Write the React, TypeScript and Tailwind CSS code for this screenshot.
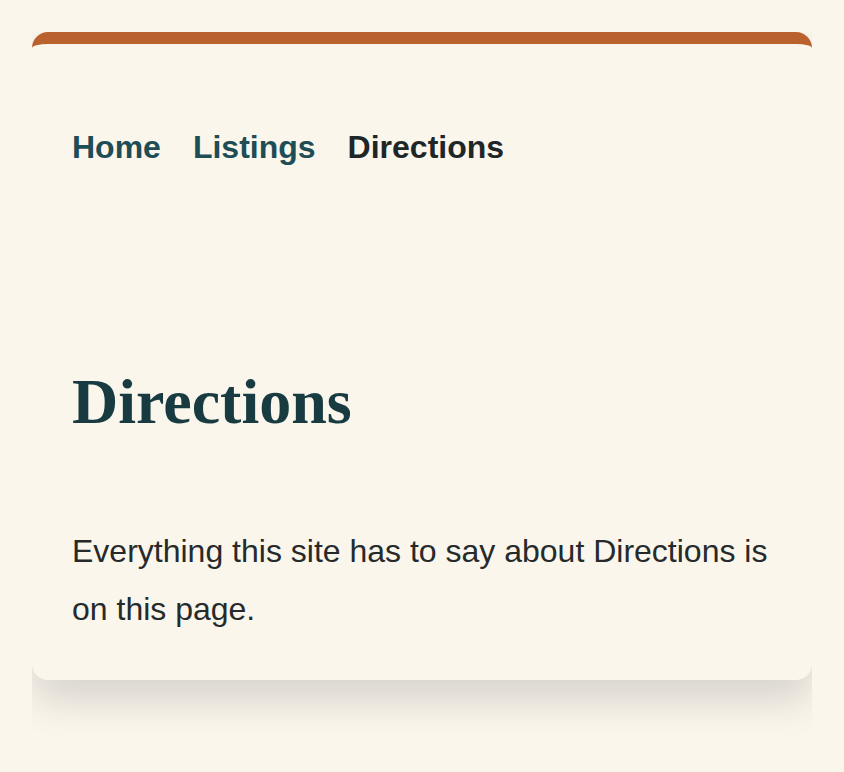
export default function App() {
  const links = [
    { label: "Home", active: false },
    { label: "Listings", active: false },
    { label: "Directions", active: true },
  ];

  return (
    <div className="min-h-screen bg-[#faf6ec] p-8 font-['Liberation_Sans',Arial,sans-serif]">
      {/* wrapper clips the card's shadow */}
      <div className="overflow-hidden pb-[60px]">
        <main className="rounded-2xl border-t-[12px] border-[#b9622e] bg-[#faf6ec] px-10 pb-[41px] pt-10 shadow-[0_20px_40px_rgba(0,0,0,0.14)]">
          <nav className="mt-[39px] flex gap-8 text-[32px] font-bold leading-[1.5]">
            {links.map((l) => (
              <a
                key={l.label}
                href="#"
                className={l.active ? "text-[#1f2628]" : "text-[#1e4d56]"}
              >
                {l.label}
              </a>
            ))}
          </nav>

          <h1 className="mt-[193px] font-['Liberation_Serif','Times_New_Roman',serif] text-[64px] font-bold leading-[1.2] text-[#173b41]">
            Directions
          </h1>

          <p className="mt-[81px] text-[32px] leading-[1.83] text-[#262a2b]">
            Everything this site has to say about Directions is on this page.
          </p>
        </main>
      </div>
    </div>
  );
}
